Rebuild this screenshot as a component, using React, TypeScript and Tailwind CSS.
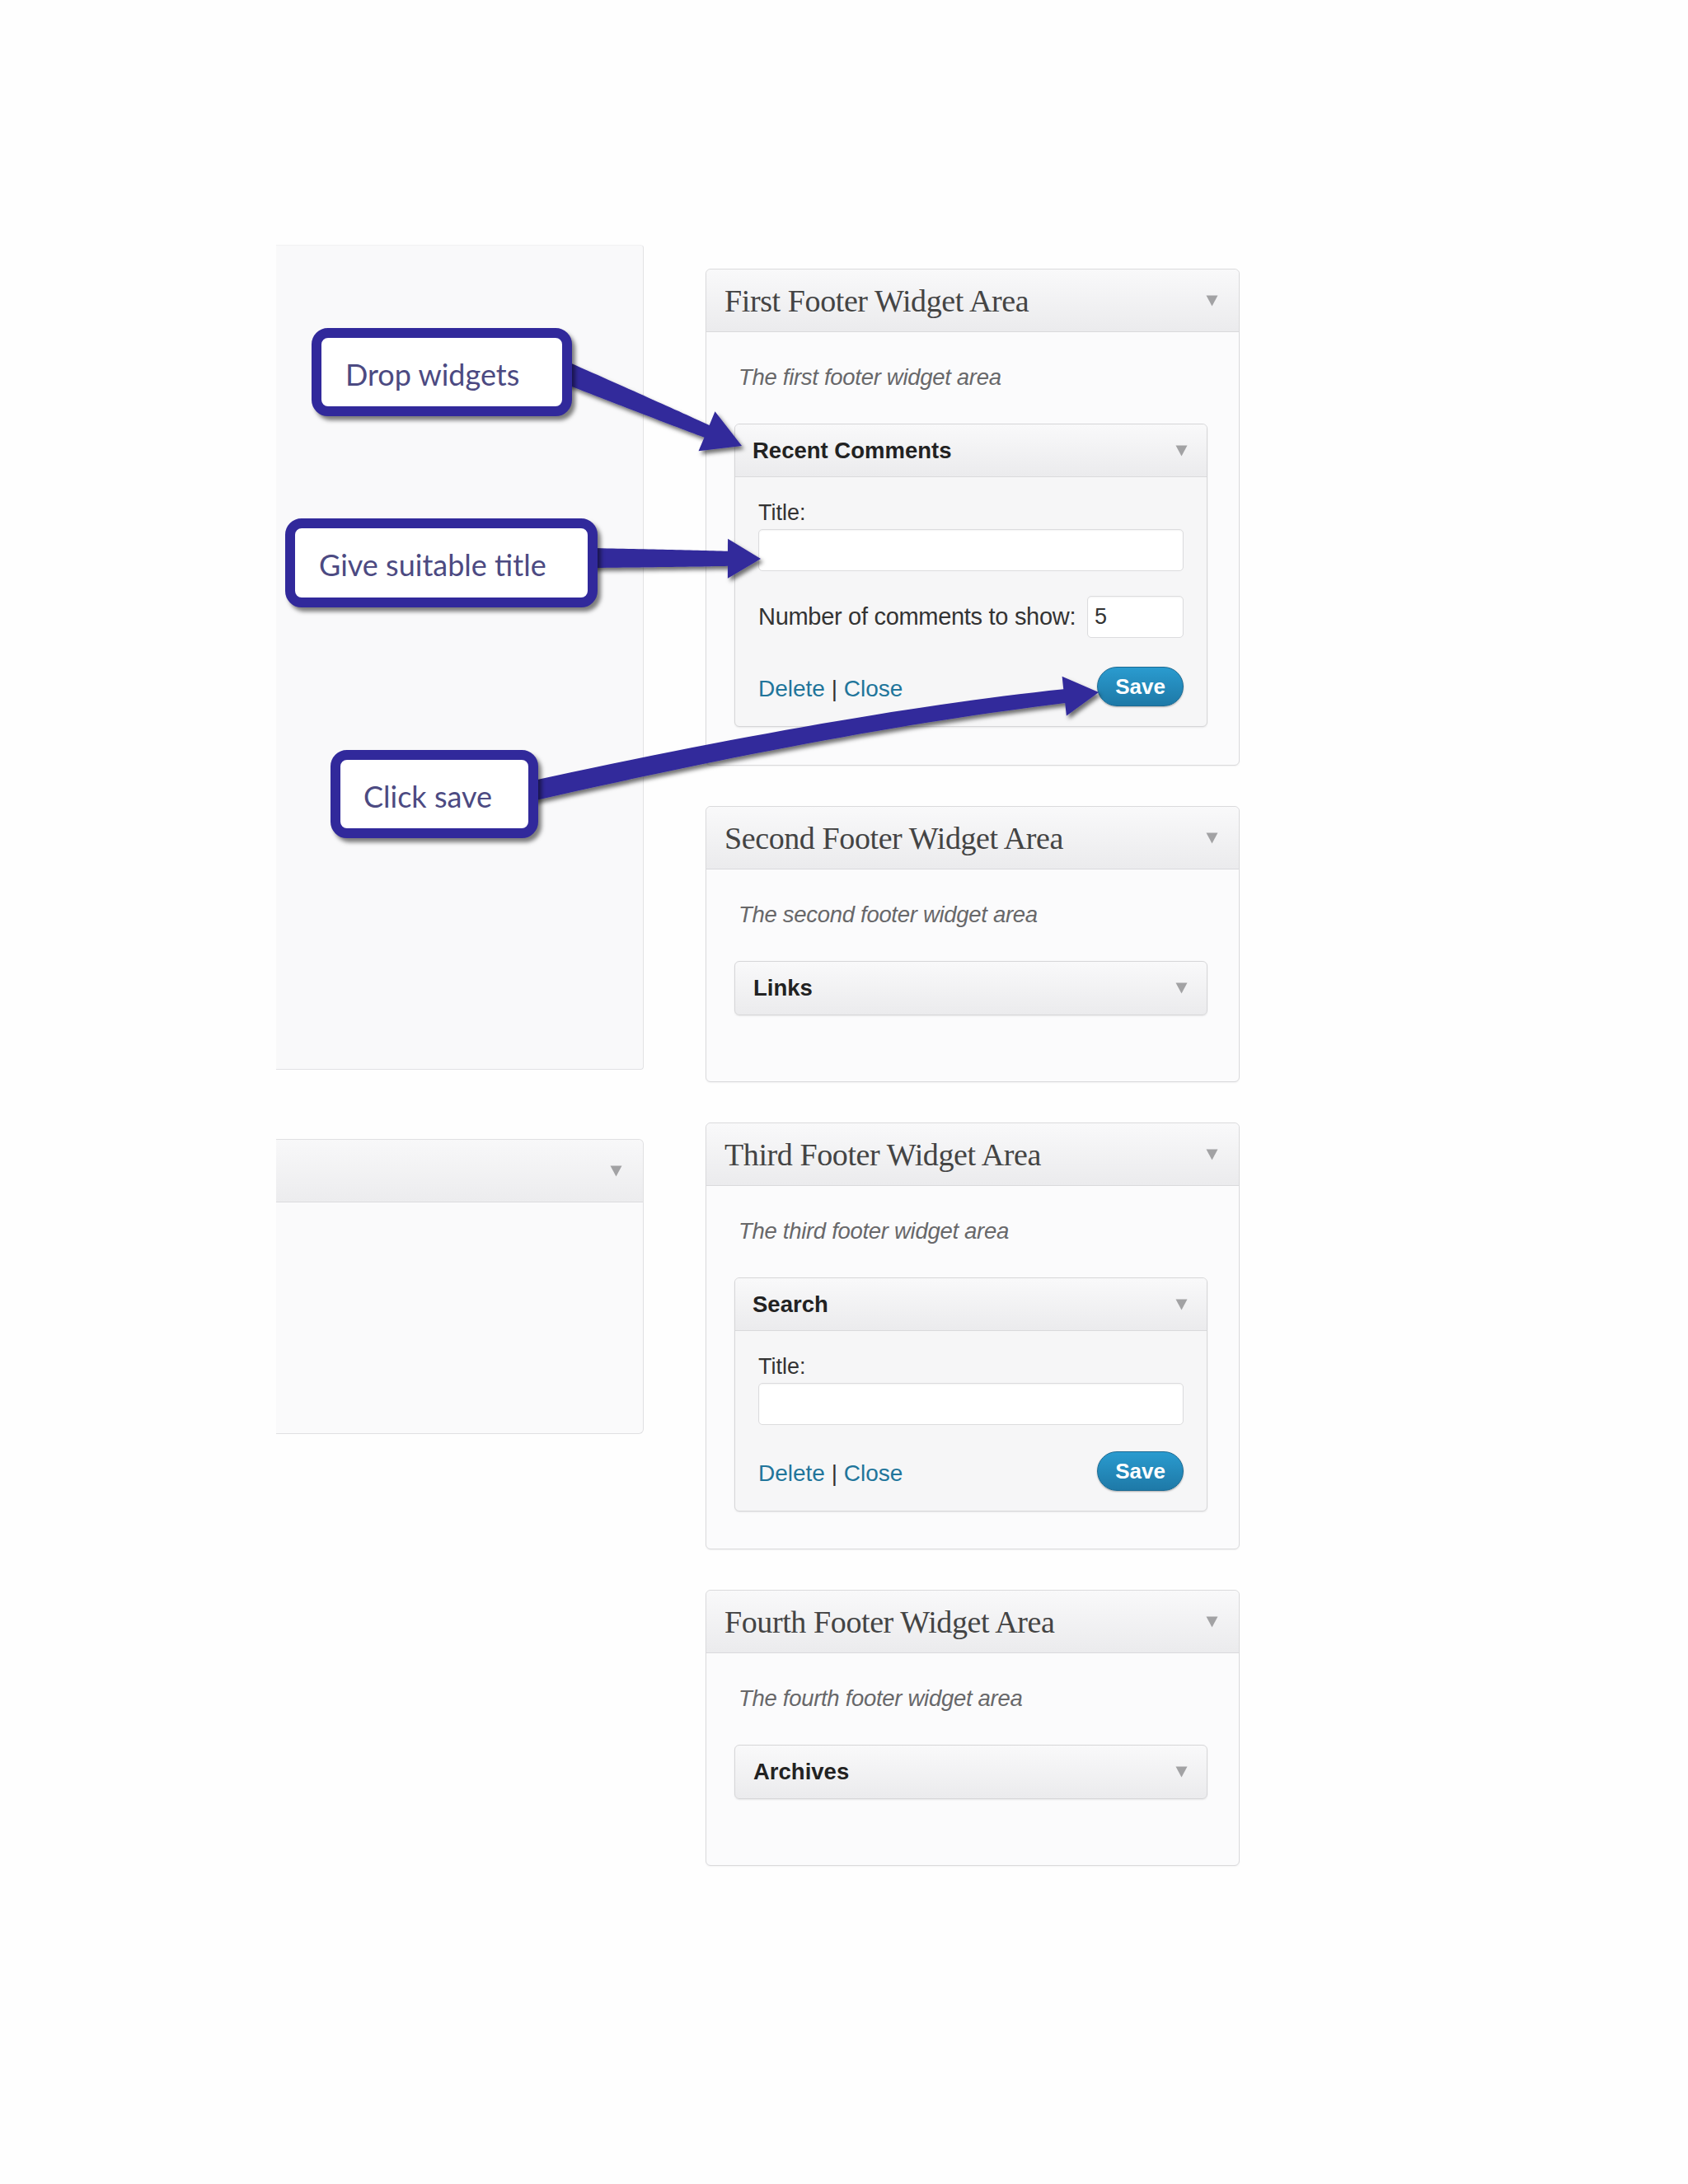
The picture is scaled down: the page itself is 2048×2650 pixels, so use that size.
import React from "react";

type P = [number, number];

function arrowPath(p0: P, c: P, tip: P, w0: number, w1: number, hl: number, hw: number): string {
  const [x0, y0] = p0;
  const [cx, cy] = c;
  const [tx, ty] = tip;
  let dx = tx - cx;
  let dy = ty - cy;
  const L = Math.hypot(dx, dy);
  dx /= L;
  dy /= L;
  const bx = tx - dx * hl;
  const by = ty - dy * hl;
  const left: P[] = [];
  const right: P[] = [];
  const N = 30;
  for (let i = 0; i <= N; i++) {
    const t = i / N;
    const x = (1 - t) * (1 - t) * x0 + 2 * (1 - t) * t * cx + t * t * bx;
    const y = (1 - t) * (1 - t) * y0 + 2 * (1 - t) * t * cy + t * t * by;
    let ddx = 2 * (1 - t) * (cx - x0) + 2 * t * (bx - cx);
    let ddy = 2 * (1 - t) * (cy - y0) + 2 * t * (by - cy);
    const l = Math.hypot(ddx, ddy);
    ddx /= l;
    ddy /= l;
    const nx = -ddy;
    const ny = ddx;
    const w = (w0 + (w1 - w0) * t) / 2;
    left.push([x + nx * w, y + ny * w]);
    right.push([x - nx * w, y - ny * w]);
  }
  const nx = -dy;
  const ny = dx;
  const pts: P[] = [
    ...left,
    [bx + (nx * hw) / 2, by + (ny * hw) / 2],
    [tx, ty],
    [bx - (nx * hw) / 2, by - (ny * hw) / 2],
    ...right.reverse(),
  ];
  return "M" + pts.map((p) => `${p[0].toFixed(1)} ${p[1].toFixed(1)}`).join(" L") + " Z";
}

function mid(a: P, b: P): P {
  return [(a[0] + b[0]) / 2, (a[1] + b[1]) / 2];
}

function Tri() {
  return (
    <svg width="15" height="14" viewBox="0 0 15 14" className="shrink-0">
      <path d="M0.5 0.5 H14.5 L7.5 13.5 Z" fill="#a2a2a4" />
    </svg>
  );
}

function Area({
  title,
  desc,
  pb,
  children,
}: {
  title: string;
  desc: string;
  pb: string;
  children: React.ReactNode;
}) {
  return (
    <div className="w-full border border-[#dadadc] rounded-[6px] bg-[#fbfbfc] shadow-[0_1px_2px_rgba(0,0,0,0.05)]">
      <div className="h-[76px] pl-[22px] pr-[25px] flex items-center justify-between bg-gradient-to-b from-[#f9f9fa] to-[#ebebed] border-b border-[#dadadc] rounded-t-[6px]">
        <span className="text-[38px] leading-none text-[#444444] font-['Liberation_Serif',serif] tracking-[-0.4px]">
          {title}
        </span>
        <Tri />
      </div>
      <div className={`pl-[34px] pr-[38px] pt-[40px] ${pb}`}>
        <p className="pl-[5px] italic text-[27.5px] leading-[30px] text-[#68686a] tracking-[-0.3px]">{desc}</p>
        <div className="mt-[41px]">{children}</div>
      </div>
    </div>
  );
}

function WidgetHeader({ name }: { name: string }) {
  return (
    <div className="h-[64px] pl-[21px] pr-[23px] flex items-center justify-between bg-gradient-to-b from-[#f9f9fa] to-[#ebebed] border-b border-[#dadadc] rounded-t-[5px]">
      <span className="text-[27.5px] font-bold text-[#222222] leading-none">{name}</span>
      <Tri />
    </div>
  );
}

function Collapsed({ name }: { name: string }) {
  return (
    <div className="h-[66px] border border-[#d6d6d8] rounded-[6px] pl-[22px] pr-[23px] flex items-center justify-between bg-gradient-to-b from-[#f9f9fa] to-[#ebebed] shadow-[0_1px_2px_rgba(0,0,0,0.08)]">
      <span className="text-[27.5px] font-bold text-[#222222] leading-none">{name}</span>
      <Tri />
    </div>
  );
}

function TextInput({ className = "", value = "" }: { className?: string; value?: string }) {
  return (
    <div
      className={`h-[51px] bg-white border border-[#dcdcde] rounded-[5px] shadow-[inset_0_1px_2px_rgba(0,0,0,0.05)] flex items-center px-[8px] text-[27px] text-[#333] ${className}`}
    >
      {value}
    </div>
  );
}

function Actions() {
  return (
    <div className="flex items-center justify-between">
      <div className="text-[28px] leading-none pt-[6px]">
        <span className="text-[#21759b]">Delete</span>
        <span className="text-[#333]"> | </span>
        <span className="text-[#21759b]">Close</span>
      </div>
      <div className="w-[105px] h-[48px] rounded-full bg-gradient-to-b from-[#2a9bcf] to-[#1e79a7] border border-[#1b6a93] shadow-[0_1px_2px_rgba(0,0,0,0.3)] flex items-center justify-center text-white font-bold text-[26px] leading-none">
        Save
      </div>
    </div>
  );
}

export default function App() {
  const a1 = arrowPath([686, 452], mid([686, 452], [900, 541]), [900, 541], 26, 16, 46, 52);
  const a2 = arrowPath([716, 677], mid([716, 677], [923, 678]), [923, 678], 24, 18, 40, 48);
  const a3 = arrowPath([644, 960], [1030, 874], [1333, 840], 24, 17, 42, 48);

  return (
    <div className="relative w-[2048px] h-[2650px] bg-[#fefefe] overflow-hidden font-['Liberation_Sans',Arial,sans-serif] text-[#333]">
      <div className="flex pl-[335px] pt-[297px]">
        {/* left column */}
        <div className="w-[446px] flex flex-col">
          <div className="h-[1001px] bg-[#f9f9fa] border-t border-r border-b border-t-[#f1f1f2] border-r-[#e2e2e4] border-b-[#e2e2e4] rounded-r-[4px]" />
          <div className="mt-[84px] h-[358px] bg-[#fafafb] border-t border-r border-b border-[#e0e0e2] rounded-r-[6px]">
            <div className="h-[76px] pr-[25px] flex items-center justify-end bg-gradient-to-b from-[#f8f8f9] to-[#ececee] border-b border-[#dcdcde] rounded-tr-[6px]">
              <Tri />
            </div>
          </div>
        </div>

        {/* right column */}
        <div className="ml-[75px] w-[648px] pt-[29px] flex flex-col gap-[49px]">
          <Area title="First Footer Widget Area" desc="The first footer widget area" pb="pb-[46px]">
            <div className="border border-[#d6d6d8] rounded-[6px] bg-[#f6f6f7] shadow-[0_1px_2px_rgba(0,0,0,0.08)]">
              <WidgetHeader name="Recent Comments" />
              <div className="pl-[28px] pr-[28px] pt-[29px] pb-[24px]">
                <div className="text-[27px] leading-[28px] text-[#333]">Title:</div>
                <TextInput className="mt-[6px]" />
                <div className="mt-[30px] flex items-center justify-between">
                  <span className="text-[29px] leading-none text-[#333] tracking-[-0.3px]">
                    Number of comments to show:
                  </span>
                  <TextInput className="w-[117px]" value="5" />
                </div>
                <div className="mt-[35px]">
                  <Actions />
                </div>
              </div>
            </div>
          </Area>

          <Area title="Second Footer Widget Area" desc="The second footer widget area" pb="pb-[80px]">
            <Collapsed name="Links" />
          </Area>

          <Area title="Third Footer Widget Area" desc="The third footer widget area" pb="pb-[45px]">
            <div className="border border-[#d6d6d8] rounded-[6px] bg-[#f6f6f7] shadow-[0_1px_2px_rgba(0,0,0,0.08)]">
              <WidgetHeader name="Search" />
              <div className="pl-[28px] pr-[28px] pt-[29px] pb-[24px]">
                <div className="text-[27px] leading-[28px] text-[#333]">Title:</div>
                <TextInput className="mt-[6px]" />
                <div className="mt-[32px]">
                  <Actions />
                </div>
              </div>
            </div>
          </Area>

          <Area title="Fourth Footer Widget Area" desc="The fourth footer widget area" pb="pb-[80px]">
            <Collapsed name="Archives" />
          </Area>
        </div>
      </div>

      {/* annotation arrows */}
      <svg className="absolute left-0 top-0 pointer-events-none" width="2048" height="2650" viewBox="0 0 2048 2650">
        <defs>
          <filter id="sh" x="-20%" y="-20%" width="140%" height="140%">
            <feDropShadow dx="3" dy="4" stdDeviation="2.5" floodColor="#000" floodOpacity="0.55" />
          </filter>
        </defs>
        <g fill="#31299b" filter="url(#sh)">
          <path d={a1} />
          <path d={a2} />
          <path d={a3} />
        </g>
      </svg>

      {/* callouts */}
      <div className="absolute left-[378px] top-[398px] w-[316px] h-[107px] border-[12px] border-[#31299b] rounded-[20px] bg-white shadow-[4px_5px_5px_rgba(0,0,0,0.5)] flex items-center pl-[29px] pt-[4px] font-['Lato',sans-serif] text-[36px] leading-none text-[#4c4a82]">
        Drop widgets
      </div>
      <div className="absolute left-[346px] top-[629px] w-[379px] h-[108px] border-[12px] border-[#31299b] rounded-[20px] bg-white shadow-[4px_5px_5px_rgba(0,0,0,0.5)] flex items-center pl-[29px] pt-[4px] font-['Lato',sans-serif] text-[36px] leading-none text-[#4c4a82]">
        Give suitable title
      </div>
      <div className="absolute left-[401px] top-[910px] w-[252px] h-[107px] border-[12px] border-[#31299b] rounded-[20px] bg-white shadow-[4px_5px_5px_rgba(0,0,0,0.5)] flex items-center pl-[28px] pt-[4px] font-['Lato',sans-serif] text-[36px] leading-none text-[#4c4a82]">
        Click save
      </div>
    </div>
  );
}
